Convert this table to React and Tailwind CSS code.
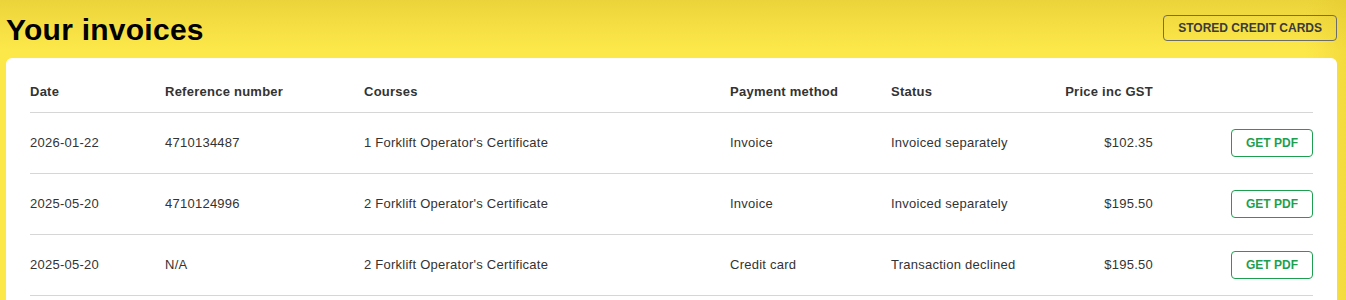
import React from "react";

const invoices = [
  {
    date: "2026-01-22",
    reference: "4710134487",
    courses: "1 Forklift Operator's Certificate",
    method: "Invoice",
    status: "Invoiced separately",
    price: "$102.35",
  },
  {
    date: "2025-05-20",
    reference: "4710124996",
    courses: "2 Forklift Operator's Certificate",
    method: "Invoice",
    status: "Invoiced separately",
    price: "$195.50",
  },
  {
    date: "2025-05-20",
    reference: "N/A",
    courses: "2 Forklift Operator's Certificate",
    method: "Credit card",
    status: "Transaction declined",
    price: "$195.50",
  },
];

const cols =
  "grid grid-cols-[135px_199px_366px_161px_142px_120px_1fr] items-center";

const App = () => {
  return (
    <div className="min-h-screen pl-[6px] pr-[9px] pt-[12px] pb-6 font-['Liberation_Sans',Arial,sans-serif] bg-[linear-gradient(to_right,rgba(255,255,255,0)_97%,rgba(225,195,40,0.35)),linear-gradient(to_bottom,#ebd43b,#fde84a_50px)]">
      <div className="flex items-start justify-between">
        <h1 className="text-[30px] leading-[36px] font-bold text-black tracking-[0.25px]">
          Your invoices
        </h1>
        <button className="mt-[3px] h-[26px] px-[14px] border border-[#6b6b6b] rounded-[4px] text-[12px] font-bold text-[#3a3a3a] uppercase">
          Stored credit cards
        </button>
      </div>

      <div className="mt-[10px] bg-white rounded-[6px] px-6 pt-[14px] pb-10 tracking-[0.25px]">
        {/* header row */}
        <div
          className={`${cols} h-[41px] border-b border-[#d6d6d6] text-[13px] font-bold text-[#333]`}
        >
          <div>Date</div>
          <div>Reference number</div>
          <div>Courses</div>
          <div>Payment method</div>
          <div>Status</div>
          <div className="text-right">Price inc GST</div>
          <div></div>
        </div>

        {invoices.map((inv, i) => (
          <div
            key={i}
            className={`${cols} h-[61px] border-b border-[#d6d6d6] text-[13px] text-[#333]`}
          >
            <div>{inv.date}</div>
            <div>{inv.reference}</div>
            <div>{inv.courses}</div>
            <div>{inv.method}</div>
            <div>{inv.status}</div>
            <div className="text-right">{inv.price}</div>
            <div className="flex justify-end">
              <button className="h-[28px] px-[14px] border border-[#1e9f4f] rounded-[4px] text-[12px] font-bold text-[#1e9f4f] uppercase tracking-normal">
                Get PDF
              </button>
            </div>
          </div>
        ))}
      </div>
    </div>
  );
};

export default App;
